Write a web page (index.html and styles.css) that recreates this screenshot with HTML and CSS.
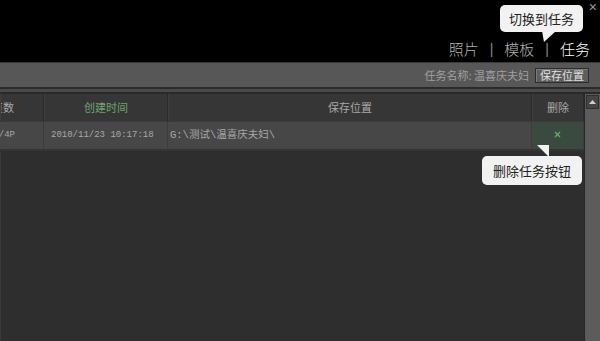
FILE: index.html
```html
<!DOCTYPE html>
<html>
<head>
<meta charset="utf-8">
<link rel="stylesheet" href="styles.css">
</head>
<body>
<div class="app">
  <header class="top">
    <span class="close">×</span>
    <nav class="tabs">
      <span class="tab">照片</span>
      <span class="bar">|</span>
      <span class="tab">模板</span>
      <span class="bar">|</span>
      <span class="tab active">任务</span>
    </nav>
    <div class="tip tip-down">切换到任务</div>
  </header>
  <div class="toolbar">
    <span class="label">任务名称: 温喜庆夫妇</span>
    <button class="btn">保存位置</button>
  </div>
  <div class="sep"></div>
  <div class="main">
    <div class="grid">
      <div class="row head">
        <div class="cell c1 right">页数</div>
        <div class="cell c2 center green">创建时间</div>
        <div class="cell c3 center">保存位置</div>
        <div class="cell c4 center">删除</div>
      </div>
      <div class="row data">
        <div class="cell c1 mono right-data">4P/4P</div>
        <div class="cell c2 mono pad">2010/11/23 10:17:18</div>
        <div class="cell c3 mono pad path">G:\测试\温喜庆夫妇\</div>
        <div class="cell c4 center del">
          <svg width="7" height="7" viewBox="0 0 7 7"><path d="M1 1L6 6M6 1L1 6" stroke="#5fae62" stroke-width="1.3"/></svg>
        </div>
      </div>
      <div class="empty"></div>
    </div>
    <div class="scroll">
      <div class="arrow"><svg width="7" height="4" viewBox="0 0 7 4"><path d="M0 4L3.5 0L7 4Z" fill="#cfcfcf"/></svg></div>
      <div class="track"></div>
    </div>
    <div class="tip tip-up">删除任务按钮</div>
  </div>
</div>
</body>
</html>
```
FILE: styles.css
```css
* { box-sizing: border-box; }
html, body { margin: 0; padding: 0; }
body {
  width: 600px; height: 341px; overflow: hidden;
  background: #2e2e2e;
  font-family: "Noto Sans CJK SC", "Liberation Sans", sans-serif;
}
.app { width: 600px; height: 341px; display: flex; flex-direction: column; position: relative; }
.top {
  height: 62px; background: #000; position: relative;
  display: flex; justify-content: flex-end; align-items: flex-end;
  padding: 0 10px 3px 0;
}
.close {
  position: absolute; right: 3px; top: 0;
  color: #9a9a9a; font: 14px/14px "Liberation Sans", sans-serif;
}
.tabs { display: flex; align-items: center; font-size: 15px; line-height: 20px; font-weight: 300; }
.tab { color: #b4b4b4; }
.tab.active { color: #fff; }
.bar { color: #8a8a8a; font: 14px "Liberation Sans", sans-serif; margin: 0 11px; }
.tip {
  position: absolute; background: #f2f2f2; color: #222;
  font-size: 13px; line-height: 27px; border-radius: 5px;
  text-align: center; z-index: 5;
}
.tip::after { content: ""; position: absolute; }
.tip-down { right: 17px; top: 5px; width: 83px; height: 27px; }
.tip-down::after {
  left: 43px; top: 26px; border-style: solid;
  border-width: 0 0 11px 14px;
  border-color: transparent transparent transparent #f2f2f2;
  transform: skewX(10deg);
}
.tip-up { left: 482px; top: 62px; width: 100px; height: 29px; line-height: 29px; }
.tip-up::after {
  left: 55px; top: -11px; border-style: solid;
  border-width: 0 12px 12px 0;
  border-color: transparent #f2f2f2 transparent transparent;
}
.toolbar {
  height: 27px; background: #575757;
  border-top: 1px solid #3a3a3a;
  border-bottom: 2px solid #2a2a2a;
  display: flex; justify-content: flex-end; align-items: center;
  padding-right: 11px; gap: 6px;
}
.label { color: #a0a0a0; font-size: 11px; }
.btn {
  height: 15px; padding: 0 4px; margin: 0;
  background: #5e5e5e; color: #e0e0e0;
  border: 1px solid #2c2c2c; box-shadow: inset 1px 1px 0 #7a7a7a;
  font: 11px "Noto Sans CJK SC", sans-serif; line-height: 12px;
}
.sep { height: 5px; background: #4a4a4a; border-bottom: 2px solid #2a2a2a; }
.main { flex: 1; display: flex; position: relative; }
.grid { width: 584px; display: flex; flex-direction: column; }
.row { display: flex; }
.head { height: 27px; background: #2b2b2b; }
.head .cell {
  background: #363636; border-right: 1px solid #2a2a2a;
  border-left: 1px solid #3e3e3e;
  color: #a8a8a8; font-size: 11px; line-height: 26px;
}
.data { height: 30px; background: #474747; border-top: 1px solid #3a3a3a; border-bottom: 2px solid #353535; }
.data .cell { border-right: 1px solid #3c3c3c; color: #a8a8a8; line-height: 26px; }
.cell { overflow: hidden; white-space: nowrap; }
.c1 { width: 44px; }
.c2 { width: 124px; }
.c3 { width: 364px; }
.c4 { width: 52px; }
.head .right { text-align: right; padding-right: 29px; direction: rtl; }
.right-data { text-align: right; padding-right: 28px; direction: rtl; }
.center { text-align: center; }
.green { color: #6fa46f !important; }
.mono { font: 9px "Liberation Mono", "Noto Sans CJK SC", monospace; }
.data .mono { line-height: 26px; }
.pad { padding-left: 7px; }
.path { font-size: 10.5px; padding-left: 2px; }
.del { background: #3b4a3f; display: flex; align-items: center; justify-content: center; padding-bottom: 2px; }
.empty { flex: 1; background: #2e2e2e; border-left: 1px solid #3a3a3a; }
.scroll { width: 16px; display: flex; flex-direction: column; background: #5c5c5c; border-left: 1px solid #262626; }
.arrow {
  height: 14px; background: #454545; border: 1px solid #2f2f2f;
  display: flex; align-items: center; justify-content: center; margin: 1px 1px 0 1px;
}
.track { flex: 1; }
```
